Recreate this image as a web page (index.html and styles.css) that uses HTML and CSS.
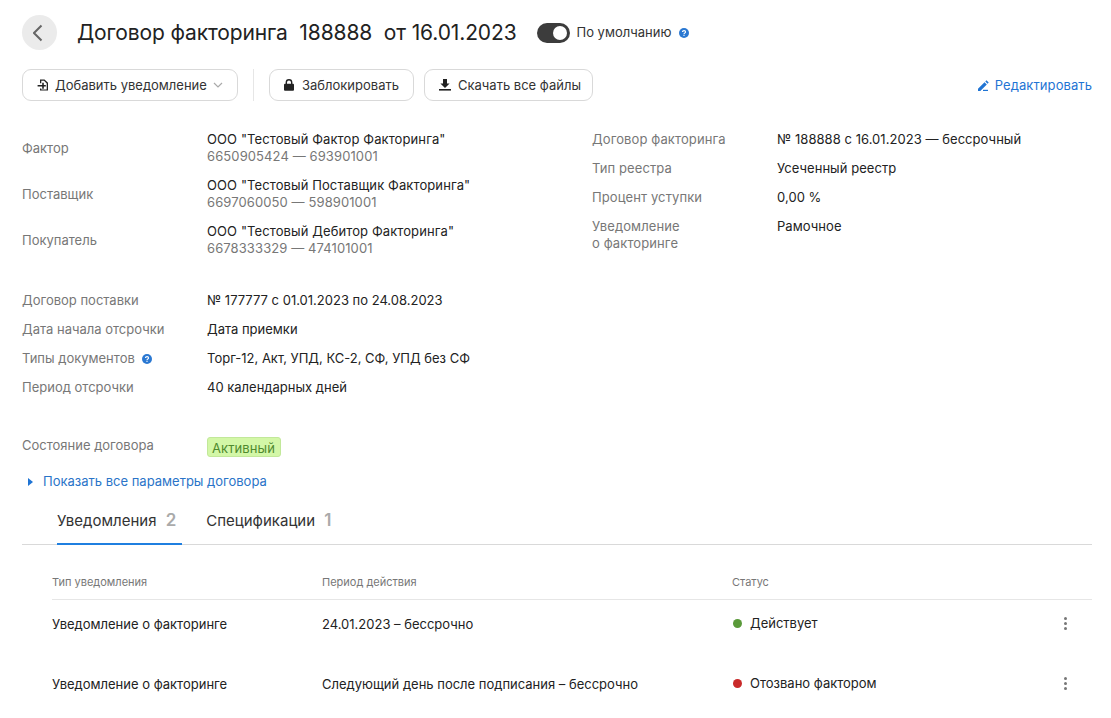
FILE: index.html
```html
<!DOCTYPE html>
<html lang="ru">
<head>
<meta charset="utf-8">
<title>Договор факторинга</title>
<link rel="stylesheet" href="styles.css">
</head>
<body>
<main class="page">
  <header class="head">
    <button class="back" type="button" aria-label="Назад">
      <svg width="14" height="18" viewBox="0 0 14 18"><path d="M8.500 1.500 1 9l7.500 7.500" fill="none" stroke="#666" stroke-width="2"/></svg>
    </button>
    <h1 class="title">Договор факторинга&nbsp; 188888&nbsp; от 16.01.2023</h1>
    <span class="toggle"><span class="knob"></span></span>
    <span class="toggle-label">По умолчанию</span>
    <svg class="help" width="10" height="10" viewBox="0 0 10 10"><circle cx="5" cy="5" r="5" fill="#2a78d2"/><path d="M3.500 3.900C3.500 2.200 6.600 2.200 6.600 3.900 6.600 5 5 4.900 5 6" fill="none" stroke="#fff" stroke-width="1.100"/><rect x="4.400" y="6.700" width="1.200" height="1.200" fill="#fff"/></svg>
  </header>

  <div class="toolbar">
    <button class="btn btn-add" type="button">
      <svg width="12" height="12" viewBox="0 0 12 12"><path d="M3 .400h4.500L11 3.800v7.800H3v-2H4.300v.800h5.400V4.400L7 1.700H4.300v2.500H3z" fill="#222"/><path d="M5.200 3.800h1.600v2.200h2v1.500h-2v2.200H5.200V7.500H.6V6h4.600z" fill="#222"/></svg>
      Добавить уведомление
      <svg class="caret" width="10" height="6" viewBox="0 0 10 6"><path d="M1 1l4 4 4-4" fill="none" stroke="#aaa" stroke-width="1.200"/></svg>
    </button>
    <span class="vsep"></span>
    <button class="btn btn-lock" type="button">
      <svg width="10" height="12" viewBox="0 0 10 12"><path d="M2.300 5V3.400a2.700 2.700 0 0 1 5.400 0V5" fill="none" stroke="#222" stroke-width="1.400"/><rect y="4.800" width="10" height="7" rx="1" fill="#222"/></svg>
      Заблокировать
    </button>
    <button class="btn btn-dl" type="button">
      <svg width="12" height="12" viewBox="0 0 12 12"><path d="M4 0h4v4.400h2.600L6 9 1.400 4.400H4z" fill="#222"/><rect y="10" width="12" height="1.600" fill="#222"/></svg>
      Скачать все файлы
    </button>
    <a class="edit" href="#">
      <svg width="11" height="11" viewBox="0 0 11 11"><path d="M0 11V8.700L6.500 2.200 8.800 4.500 2.300 11zM7.300 1.400 8.400.300 10.700 2.600 9.600 3.700z" fill="#1f74d4"/><rect x="5" y="9.800" width="5" height="1.200" fill="#1f74d4"/></svg>
      Редактировать
    </a>
  </div>

  <section class="info">
    <div class="col-left">
      <dl class="parties">
        <div class="party"><dt class="label">Фактор</dt><dd class="value">ООО "Тестовый Фактор Факторинга"<span class="sub">6650905424 — 693901001</span></dd></div>
        <div class="party"><dt class="label">Поставщик</dt><dd class="value">ООО "Тестовый Поставщик Факторинга"<span class="sub">6697060050 — 598901001</span></dd></div>
        <div class="party"><dt class="label">Покупатель</dt><dd class="value">ООО "Тестовый Дебитор Факторинга"<span class="sub">6678333329 — 474101001</span></dd></div>
      </dl>
      <dl class="rows">
        <div class="row"><dt class="label">Договор поставки</dt><dd class="value">№ 177777 с 01.01.2023 по 24.08.2023</dd></div>
        <div class="row"><dt class="label">Дата начала отсрочки</dt><dd class="value">Дата приемки</dd></div>
        <div class="row"><dt class="label">Типы документов
          <svg class="help-inline" width="10" height="10" viewBox="0 0 10 10"><circle cx="5" cy="5" r="5" fill="#2a78d2"/><path d="M3.500 3.900C3.500 2.200 6.600 2.200 6.600 3.900 6.600 5 5 4.900 5 6" fill="none" stroke="#fff" stroke-width="1.100"/><rect x="4.400" y="6.700" width="1.200" height="1.200" fill="#fff"/></svg></dt><dd class="value">Торг-12, Акт, УПД, КС-2, СФ, УПД без СФ</dd></div>
        <div class="row"><dt class="label">Период отсрочки</dt><dd class="value">40 календарных дней</dd></div>
      </dl>
      <dl class="state">
        <dt class="label">Состояние договора</dt><dd class="value"><span class="badge">Активный</span></dd>
      </dl>
    </div>
    <dl class="col-right">
      <div class="row"><dt class="label">Договор факторинга</dt><dd class="value">№ 188888 с 16.01.2023 — бессрочный</dd></div>
      <div class="row"><dt class="label">Тип реестра</dt><dd class="value">Усеченный реестр</dd></div>
      <div class="row"><dt class="label">Процент уступки</dt><dd class="value">0,00 %</dd></div>
      <div class="row"><dt class="label">Уведомление<br>о факторинге</dt><dd class="value">Рамочное</dd></div>
    </dl>
  </section>

  <a class="more" href="#"><svg width="5" height="8" viewBox="0 0 5 8"><path d="M0 0l5 4-5 4z" fill="#1f74d4"/></svg>Показать все параметры договора</a>

  <nav class="tabs">
    <a class="tab tab-active" href="#">Уведомления <b class="count">2</b></a>
    <a class="tab" href="#">Спецификации <b class="count">1</b></a>
  </nav>

  <table class="table">
    <thead>
      <tr><th class="c1">Тип уведомления</th><th class="c2">Период действия</th><th class="c3">Статус</th><th class="c4"></th></tr>
    </thead>
    <tbody>
      <tr>
        <td>Уведомление о факторинге</td><td>24.01.2023 – бессрочно</td>
        <td class="status"><span class="dot dot-green"></span>Действует</td>
        <td class="menu"><span class="kebab"><i></i><i></i><i></i></span></td>
      </tr>
      <tr>
        <td>Уведомление о факторинге</td><td>Следующий день после подписания – бессрочно</td>
        <td class="status"><span class="dot dot-red"></span>Отозвано фактором</td>
        <td class="menu"><span class="kebab"><i></i><i></i><i></i></span></td>
      </tr>
    </tbody>
  </table>
</main>
</body>
</html>
```
FILE: styles.css
```css
* { box-sizing: border-box; }
html, body { margin: 0; height: 100%; overflow: hidden; }
body { background: #fff; color: #222; font: 13px/17px Inter, "Noto Sans", sans-serif; }
dl, dd, dt { margin: 0; }
a { text-decoration: none; }
.page { padding: 15px 19px 0 22px; }

.head { display: flex; align-items: center; height: 35px; }
.back { width: 35px; height: 35px; border: 0; padding: 0; border-radius: 50%; background: #ebebeb; display: flex; align-items: center; justify-content: center; }
.title { margin: 0 0 0 20px; font-size: 21px; letter-spacing: -0.12px; line-height: 35px; font-weight: 400; color: #222; }
.toggle { width: 33px; height: 20px; margin-left: 20px; border-radius: 10px; background: #3c3c3c; position: relative; }
.knob { position: absolute; right: 3px; top: 3px; width: 14px; height: 14px; border-radius: 50%; background: #fff; }
.toggle-label { margin-left: 7px; color: #333; }
.help { margin-left: 8px; }

.toolbar { display: flex; align-items: center; margin-top: 19px; height: 32px; }
.btn { height: 32px; border: 1px solid #d9d9d9; border-radius: 9px; background: #fff; color: #333; font: inherit; display: flex; align-items: center; padding: 0; }
.btn-add { width: 216px; padding-left: 14px; gap: 6px; }
.caret { margin-left: 0; }
.vsep { width: 1px; height: 32px; background: #e6e6e6; margin: 0 15px; }
.btn-lock { width: 145px; padding-left: 14px; gap: 8px; }
.btn-dl { width: 169px; margin-left: 10px; padding-left: 14px; gap: 7px; }
.edit { margin-left: auto; color: #1f74d4; letter-spacing: 0.08px; display: flex; align-items: center; gap: 6px; }

.info { display: flex; margin-top: 24px; }
.col-left { width: 570px; }
.col-right { width: 500px; }
.label { color: #777; }
.value { color: #222; }
.col-right .label, .party .value { letter-spacing: 0.1px; }
.col-right .value { letter-spacing: 0.05px; }

.party { display: grid; grid-template-columns: 185px 1fr; align-items: center; height: 46px; }
.sub { display: block; color: #777; }
.rows { margin-top: 23px; }
.row { display: grid; grid-template-columns: 185px 1fr; min-height: 29px; padding-top: 6px; }
.help-inline { margin-left: 4px; vertical-align: -1px; }
.state { display: grid; grid-template-columns: 185px 1fr; margin-top: 35px; height: 22px; align-items: start; }
.badge { display: inline-block; height: 20px; padding: 1px 5px 1px 4px; letter-spacing: 0.1px; line-height: 18px; background: #d3f7a7; border: 1px solid #c2e89a; border-radius: 3px; color: #4f8a2e; }
.more { display: flex; align-items: center; gap: 10px; margin: 14px 0 0 6px; height: 17px; color: #2a74c8; }

.tabs { display: flex; margin-top: 10px; height: 45px; border-bottom: 1px solid #d9d9d9; padding-left: 35px; gap: 24px; }
.tab { display: block; font-size: 15px; line-height: 18px; padding: 11px 6px 0 0; color: #333; height: 45px; }
.tab-active { border-bottom: 2px solid #1f7fe0; }
.count { font-size: 17px; font-weight: 600; color: #aaa; margin-left: 5px; }

.table { width: 1040px; margin: 20px 0 0 30px; border-collapse: collapse; table-layout: fixed; }
th { font-weight: 400; font-size: 11px; line-height: 14px; color: #777; text-align: left; height: 34px; padding: 0; border-bottom: 1px solid #e6e6e6; }
td { height: 60px; padding: 0 0 9px; color: #222; vertical-align: middle; }
.c1 { width: 270px; }
.c2 { width: 410px; }
.c3 { width: 320px; }
td.status { padding-bottom: 11px; }
.dot { display: inline-block; width: 9px; height: 9px; border-radius: 50%; margin: 0 8px 0 1px; }
.dot-green { background: #5a9a3a; }
.dot-red { background: #c92a2a; }
td.menu { text-align: right; padding-bottom: 13px; }
.kebab { display: inline-flex; flex-direction: column; gap: 2px; margin-right: 25px; vertical-align: middle; }
.kebab i { display: block; width: 3px; height: 3px; border-radius: 50%; background: #777; }
```
